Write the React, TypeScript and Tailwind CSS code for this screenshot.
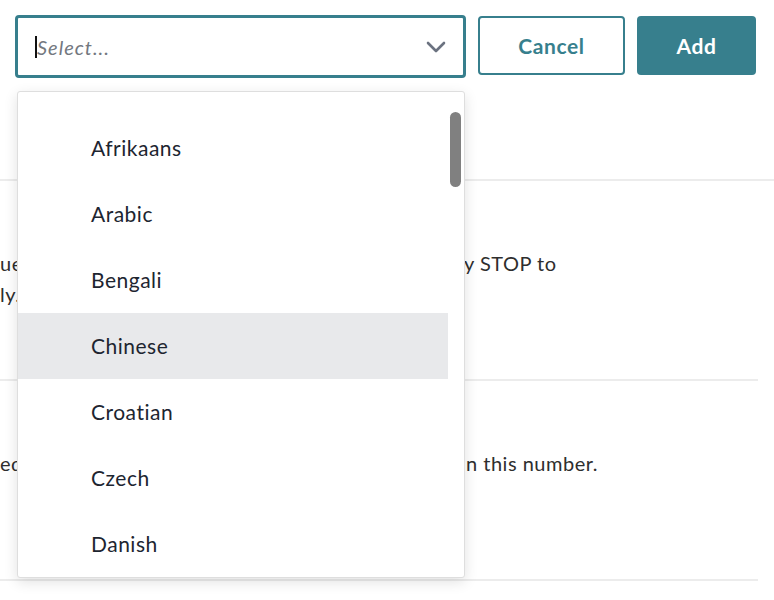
import { useState } from "react";

const languages = [
  "Afrikaans",
  "Arabic",
  "Bengali",
  "Chinese",
  "Croatian",
  "Czech",
  "Danish",
  "Dutch",
  "English",
];

const font = { fontFamily: "Lato, 'Liberation Sans', sans-serif" };

function Chevron() {
  return (
    <svg width="20" height="12" viewBox="0 0 20 12" fill="none">
      <path
        d="M2 2l8 8 8-8"
        stroke="#6b7280"
        strokeWidth="2.6"
        strokeLinecap="round"
        strokeLinejoin="round"
      />
    </svg>
  );
}

export default function App() {
  const [hover] = useState("Chinese");

  return (
    <div
      className="relative h-[600px] w-[774px] overflow-hidden bg-white text-[#2e2e2e]"
      style={font}
    >
      {/* top row */}
      <div className="h-[181px] border-b-2 border-[#ececec] pl-[15px] pt-[15px]">
        <div className="flex items-start gap-3">
          <div className="relative">
            <div className="flex h-[63px] w-[451px] items-center rounded-[4px] border-[3px] border-[#377f8d] pl-[17px] pr-[17px]">
              <span className="h-[22px] w-[2px] bg-[#111]" />
              <span className="flex-1 text-[20px] italic tracking-[1px] text-[#737880]">
                Select...
              </span>
              <Chevron />
            </div>

            {/* dropdown menu */}
            <div className="absolute left-[2px] top-[76px] z-10 h-[487px] w-[448px] overflow-hidden rounded-[3px] border border-[#dedede] bg-white pt-[23px] shadow-[0_4px_14px_rgba(0,0,0,0.12)]">
              <ul className="pr-[16px]">
                {languages.map((lang) => (
                  <li
                    key={lang}
                    className={`flex h-[66px] items-center pl-[73px] text-[21px] tracking-[0.5px] text-[#1d2530] ${
                      lang === hover ? "bg-[#e8e9eb]" : ""
                    }`}
                  >
                    {lang}
                  </li>
                ))}
              </ul>
              <div className="absolute right-[3px] top-[20px] h-[75px] w-[11px] rounded-full bg-[#808080]" />
            </div>
          </div>

          <button
            type="button"
            className="mt-px flex h-[59px] w-[147px] items-center justify-center rounded-[4px] border-2 border-[#377f8d] bg-white text-[21px] font-bold tracking-[0.6px] text-[#377f8d]"
          >
            Cancel
          </button>
          <button
            type="button"
            className="mt-px flex h-[59px] w-[119px] items-center justify-center rounded-[4px] bg-[#377f8d] text-[21px] font-bold tracking-[0.6px] text-white"
          >
            Add
          </button>
        </div>
      </div>

      {/* settings rows behind the menu */}
      <div className="h-[200px] w-[758px] border-b-2 border-[#ececec] pt-[67px] text-[20px] leading-[31px] tracking-[0.5px]">
        <div className="flex whitespace-nowrap">
          <span className="w-[464px] overflow-hidden">ues: messages sent to contacts can repl</span>
          <span>y STOP to</span>
        </div>
        <div>ly.</div>
      </div>
      <div className="h-[200px] w-[758px] border-b-2 border-[#ececec] pt-[67px] text-[20px] leading-[31px] tracking-[0.5px]">
        <div className="flex whitespace-nowrap">
          <span className="w-[466px] overflow-hidden">ed when a message is received o</span>
          <span>n this number.</span>
        </div>
      </div>
    </div>
  );
}
